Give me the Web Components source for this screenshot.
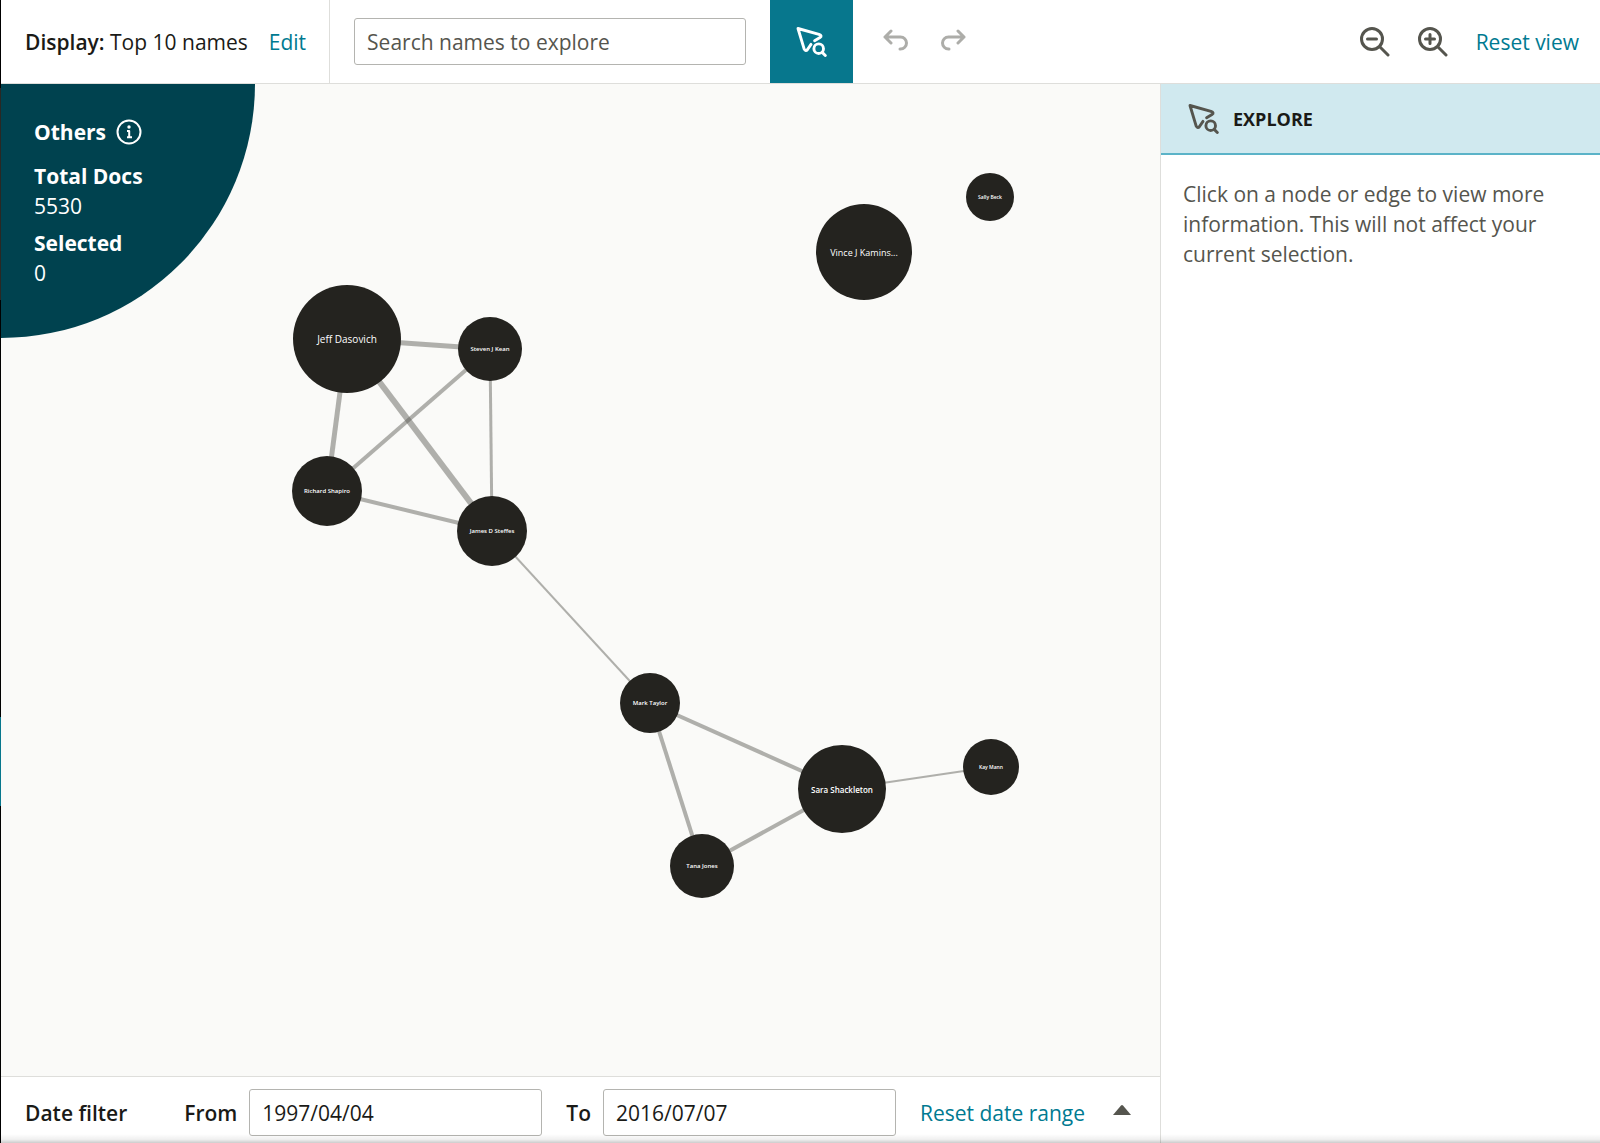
<!DOCTYPE html>
<html lang="en">
<head>
<meta charset="utf-8">
<title>Communication explorer</title>
<style>
  html, body { height: 100%; }
  body {
    margin: 0;
    font: 21px/30px "Open Sans", "Noto Sans", sans-serif;
    color: #1a1a17;
    --ink: #1a1a17;
    --muted: #55554e;
    --link: #007a91;
    --teal: #07778d;
    --line: #dededb;
    --field: #b4b4b0;
    --canvas: #fafaf8;
  }
</style>
</head>
<body>
<explorer-app>
  <tool-bar slot="top"></tool-bar>
  <network-graph slot="graph">
    <others-summary total="5530" selected="0"></others-summary>
  </network-graph>
  <date-filter slot="bottom" from="1997/04/04" to="2016/07/07"></date-filter>
  <side-panel slot="side" heading="EXPLORE">Click on a node or edge to view more information. This will not affect your current selection.</side-panel>
</explorer-app>

<script>
const BASE = `
  :host, *, *::before, *::after { box-sizing: border-box; }
  button, input { font: inherit; color: inherit; margin: 0; }
  button { border: 0; background: none; padding: 0; cursor: pointer; }
  input { height: 47px; padding: 0 12px; border: 1px solid var(--field); border-radius: 3px; background: #fff; outline: 0; }
  a { color: var(--link); text-decoration: none; white-space: nowrap; }
  svg { display: block; flex: none; }
`;

class Base extends HTMLElement {
  connectedCallback() {
    if (this.shadowRoot) return;
    this.attachShadow({ mode: 'open' }).innerHTML = `<style>${BASE}${this.styles()}</style>${this.markup()}`;
  }
  styles() { return ''; }
  markup() { return ''; }
}

const SHAPES = {
  explore: `<g stroke-width="2.900"><path d="M15 18.400 11.500 23.500Q9.700 25.800 8.200 23.100L2 2.500 23 8.300Q26.600 9.800 24 11.500L18.600 14.800"/><circle cx="22.700" cy="22.700" r="4.800"/><path d="M26.200 26.400 29.300 29.500"/></g>`,
  undo: `<g stroke-width="3"><path d="M8 2 2 8l6 6M2 8h15.500a6 6 0 0 1 0 12H17"/></g>`,
  redo: `<g stroke-width="3"><path d="M18 2l6 6-6 6M24 8H8.500a6 6 0 0 0 0 12H9"/></g>`,
  out: `<g stroke-width="3"><circle cx="12" cy="12" r="10.500"/><path d="M20 20l8 8M7.500 12h9"/></g>`,
  in: `<g stroke-width="3"><circle cx="12" cy="12" r="10.500"/><path d="M20 20l8 8M7.500 12h9M12 7.500v9"/></g>`,
  info: `<circle cx="13" cy="13" r="11.500" stroke-width="2"/><circle cx="13" cy="8" r="1.700" fill="currentColor" stroke="none"/><path d="M11 12h2.200v6M11 18.200h5" stroke-width="2" stroke-linecap="butt"/>`,
  caret: `<path d="M0 11 8 1.500Q9 .5 10 1.500L18 11Z" fill="currentColor" stroke="none"/>`
};
const SIZES = { explore: [31, 31], undo: [26, 25], redo: [26, 25], out: [30, 30], in: [30, 30], info: [26, 26], caret: [18, 11] };

class UiIcon extends Base {
  styles() { return `:host { display: block; flex: none; }`; }
  markup() {
    const n = this.getAttribute('name'), [w, h] = SIZES[n];
    return `<svg width="${w}" height="${h}" viewBox="0 0 ${w} ${h}" fill="none" stroke="currentColor" stroke-linecap="round" stroke-linejoin="round" aria-hidden="true">${SHAPES[n]}</svg>`;
  }
}

class ExplorerApp extends Base {
  styles() { return `
    :host { display: flex; height: 100vh; position: relative; background: #fff; }
    .rail { width: 1px; flex: none; background: linear-gradient(#000 0 88px, #2a2824 88px 300px, #000 300px 717px, var(--teal) 717px 806px, #000 806px); }
    .app { flex: 1; display: flex; flex-direction: column; min-width: 0; }
    .body { flex: 1; display: flex; min-height: 0; }
    .main { flex: 1; display: flex; flex-direction: column; min-width: 0; }
    .fade { position: absolute; left: 0; right: 0; bottom: 0; height: 9px; pointer-events: none;
      background: linear-gradient(rgba(0,0,0,0), rgba(0,0,0,.06) 60%, rgba(0,0,0,.2)); }
  `; }
  markup() { return `
    <div class="rail"></div>
    <div class="app">
      <slot name="top"></slot>
      <div class="body">
        <main class="main"><slot name="graph"></slot><slot name="bottom"></slot></main>
        <slot name="side"></slot>
      </div>
    </div>
    <div class="fade"></div>`; }
}

class ToolBar extends Base {
  styles() { return `
    :host { display: flex; flex: none; height: 84px; border-bottom: 1px solid var(--line); background: #fff; }
    .display { display: flex; align-items: center; gap: 21px; padding: 0 23px 0 24px; border-right: 1px solid var(--line); white-space: nowrap; }
    .display b { font-weight: 600; }
    .search { display: flex; align-items: center; padding: 0 24px; }
    input { width: 392px; }
    input::placeholder { color: var(--muted); opacity: 1; }
    .explore { width: 83px; display: grid; place-items: center; background: var(--teal); color: #fff; }
    .history, .view { display: flex; align-items: center; }
    .history { gap: 31px; padding: 0 30px; color: #adada9; }
    .view { gap: 28px; margin-left: auto; padding-right: 21px; color: var(--muted); }
  `; }
  markup() { return `
    <div class="display"><span><b>Display:</b> Top 10 names</span><a href="#edit">Edit</a></div>
    <div class="search"><input type="text" placeholder="Search names to explore" aria-label="Search names to explore"></div>
    <button class="explore" aria-label="Explore"><ui-icon name="explore"></ui-icon></button>
    <div class="history">
      <button aria-label="Undo"><ui-icon name="undo"></ui-icon></button>
      <button aria-label="Redo"><ui-icon name="redo"></ui-icon></button>
    </div>
    <div class="view">
      <button aria-label="Zoom out"><ui-icon name="out"></ui-icon></button>
      <button aria-label="Zoom in"><ui-icon name="in"></ui-icon></button>
      <a href="#reset">Reset view</a>
    </div>`; }
}

class OthersSummary extends Base {
  styles() { return `
    :host { display: block; width: 254px; height: 254px; padding: 33px 0 0 33px; color: #fff; background: #00424f; border-radius: 0 0 100% 0; }
    h2 { display: flex; align-items: center; gap: 10px; margin: 0 0 14px; font: inherit; font-weight: 700; }
    dl { margin: 0; }
    dt { font-weight: 700; }
    dd { margin: 0 0 7px; }
  `; }
  markup() { return `
    <h2>Others <ui-icon name="info"></ui-icon></h2>
    <dl><dt>Total Docs</dt><dd>${this.getAttribute('total')}</dd>
    <dt>Selected</dt><dd>${this.getAttribute('selected')}</dd></dl>`; }
}

// name: [x, y, radius, label size]
const NODES = {
  'Jeff Dasovich': [346, 255, 54, 10],
  'Steven J Kean': [489, 265, 32, 6],
  'Richard Shapiro': [326, 407, 35, 6],
  'James D Steffes': [491, 447, 35, 6],
  'Mark Taylor': [649, 619, 30, 6],
  'Sara Shackleton': [841, 705, 44, 8],
  'Kay Mann': [990, 683, 28, 5],
  'Tana Jones': [701, 782, 32, 6],
  'Vince J Kamins...': [863, 168, 48, 9],
  'Sally Beck': [989, 113, 24, 5]
};
// source, target, stroke width
const EDGES = [
  ['Jeff Dasovich', 'Steven J Kean', 5],
  ['Jeff Dasovich', 'Richard Shapiro', 5],
  ['Jeff Dasovich', 'James D Steffes', 6],
  ['Steven J Kean', 'Richard Shapiro', 4],
  ['Steven J Kean', 'James D Steffes', 3],
  ['Richard Shapiro', 'James D Steffes', 4],
  ['James D Steffes', 'Mark Taylor', 2],
  ['Mark Taylor', 'Sara Shackleton', 4],
  ['Mark Taylor', 'Tana Jones', 4],
  ['Sara Shackleton', 'Tana Jones', 4],
  ['Sara Shackleton', 'Kay Mann', 2]
];

class NetworkGraph extends Base {
  styles() { return `
    :host { display: block; flex: 1; min-height: 0; position: relative; overflow: hidden; background: var(--canvas); }
    svg { position: absolute; inset: 0; width: 100%; height: 100%; }
    ::slotted(*) { position: absolute; left: 0; top: 0; }
    line { stroke: #55554e; stroke-opacity: .45; }
    circle { fill: #24231f; }
    text { fill: #fff; font-weight: 500; text-anchor: middle; dominant-baseline: central; }
    .small { font-weight: 600; }
  `; }
  markup() {
    const lines = EDGES.map(([a, b, w]) => {
      const [x1, y1] = NODES[a], [x2, y2] = NODES[b];
      return `<line x1="${x1}" y1="${y1}" x2="${x2}" y2="${y2}" stroke-width="${w}"/>`;
    }).join('');
    const nodes = Object.entries(NODES).map(([n, [x, y, r, s]]) =>
      `<g><circle cx="${x}" cy="${y}" r="${r}"/><text x="${x}" y="${y}" font-size="${s}"${s < 9 ? ' class="small"' : ''}>${n}</text></g>`).join('');
    return `<svg role="group" aria-label="Communication network">${lines}${nodes}</svg><slot></slot>`;
  }
}

class DateFilter extends Base {
  styles() { return `
    :host { display: flex; flex: none; align-items: center; padding: 12px 29px 7px 24px; border-top: 1px solid var(--line); background: #fff; }
    b, label { font-weight: 600; white-space: nowrap; }
    b { margin-right: 57px; }
    label { margin-right: 12px; }
    input { flex: 1; min-width: 0; margin-right: 24px; }
    button { margin: 0 0 7px 28px; color: var(--muted); }
  `; }
  markup() { return `
    <b>Date filter</b>
    <label for="from">From</label><input id="from" type="text" value="${this.getAttribute('from')}">
    <label for="to">To</label><input id="to" type="text" value="${this.getAttribute('to')}">
    <a href="#dates">Reset date range</a>
    <button aria-label="Expand date filter"><ui-icon name="caret"></ui-icon></button>`; }
}

class SidePanel extends Base {
  styles() { return `
    :host { display: block; flex: none; width: 440px; border-left: 1px solid var(--line); background: #fff; }
    header { display: flex; align-items: center; gap: 14px; height: 71px; padding: 0 27px; background: #d0e9ef; border-bottom: 2px solid #5bb3c8; color: var(--muted); }
    h2 { margin: 0; font-size: 18px; font-weight: 700; color: var(--ink); }
    p { margin: 0; padding: 24px 22px; color: var(--muted); }
  `; }
  markup() { return `
    <header><ui-icon name="explore"></ui-icon><h2>${this.getAttribute('heading')}</h2></header>
    <p><slot></slot></p>`; }
}

customElements.define('ui-icon', UiIcon);
customElements.define('tool-bar', ToolBar);
customElements.define('others-summary', OthersSummary);
customElements.define('network-graph', NetworkGraph);
customElements.define('date-filter', DateFilter);
customElements.define('side-panel', SidePanel);
customElements.define('explorer-app', ExplorerApp);
</script>
</body>
</html>
